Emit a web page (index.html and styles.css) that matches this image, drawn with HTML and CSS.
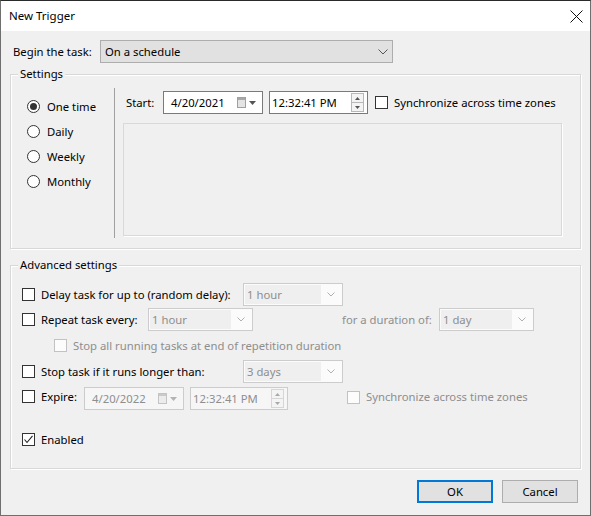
FILE: index.html
```html
<!DOCTYPE html>
<html>
<head>
<meta charset="utf-8">
<link rel="stylesheet" href="styles.css">
</head>
<body>
<div class="window">
  <div class="titlebar">
    <span class="title">New Trigger</span>
    <svg class="close" width="13" height="13" viewBox="0 0 13 13"><path d="M0.5 0.5 L12.5 12.5 M12.5 0.5 L0.5 12.5" stroke="#111" stroke-width="1" fill="none"/></svg>
  </div>
  <div class="content">
    <div class="begin-row">
      <span class="begin-label">Begin the task:</span>
      <div class="combo">
        <span class="combo-text">On a schedule</span>
        <svg class="chev" width="10" height="6" viewBox="0 0 10 6"><path d="M0.5 0.5 L5 5 L9.5 0.5" stroke="#555" stroke-width="1" fill="none"/></svg>
      </div>
    </div>

    <div class="group settings">
      <span class="legend">Settings</span>
      <div class="settings-body">
        <div class="radios">
          <div class="radio-row"><span class="radio checked"></span><span>One time</span></div>
          <div class="radio-row"><span class="radio"></span><span>Daily</span></div>
          <div class="radio-row"><span class="radio"></span><span>Weekly</span></div>
          <div class="radio-row"><span class="radio"></span><span>Monthly</span></div>
        </div>
        <div class="sched">
          <div class="start-row">
            <span class="start-label">Start:</span>
            <div class="field date">
              <span class="field-text">4/20/2021</span>
              <svg class="cal" width="9" height="11" viewBox="0 0 9 11"><rect x="0.5" y="0.5" width="8" height="10" fill="#e4e4e4" stroke="#a0a0a0"/><rect x="1" y="1" width="7" height="2" fill="#a8a8a8"/></svg>
              <svg class="tri" width="7" height="4" viewBox="0 0 7 4"><path d="M0 0 L7 0 L3.5 4 Z" fill="#555"/></svg>
            </div>
            <div class="field time">
              <span class="field-text">12:32:41 PM</span>
              <div class="spin">
                <span class="spin-btn"><svg width="5" height="3" viewBox="0 0 5 3"><path d="M0 3 L5 3 L2.5 0 Z" fill="#555"/></svg></span>
                <span class="spin-btn"><svg width="5" height="3" viewBox="0 0 5 3"><path d="M0 0 L5 0 L2.5 3 Z" fill="#555"/></svg></span>
              </div>
            </div>
            <span class="check sync-check"></span>
            <span class="label-after">Synchronize across time zones</span>
          </div>
          <div class="panel"></div>
        </div>
      </div>
    </div>

    <div class="group advanced">
      <span class="legend">Advanced settings</span>
      <div class="adv-body">
        <div class="row r1">
          <span class="check"></span>
          <span class="lbl w-delay">Delay task for up to (random delay):</span>
          <div class="dd w100"><span class="dd-text">1 hour</span><svg class="dchev" width="8" height="5" viewBox="0 0 8 5"><path d="M0.5 0.5 L4 4 L7.5 0.5" stroke="#b0b0b0" fill="none"/></svg></div>
        </div>
        <div class="row r2">
          <span class="check"></span>
          <span class="lbl w-repeat">Repeat task every:</span>
          <div class="dd w105"><span class="dd-text">1 hour</span><svg class="dchev" width="8" height="5" viewBox="0 0 8 5"><path d="M0.5 0.5 L4 4 L7.5 0.5" stroke="#b0b0b0" fill="none"/></svg></div>
          <span class="lbl dis w-dur">for a duration of:</span>
          <div class="dd w95"><span class="dd-text">1 day</span><svg class="dchev" width="8" height="5" viewBox="0 0 8 5"><path d="M0.5 0.5 L4 4 L7.5 0.5" stroke="#b0b0b0" fill="none"/></svg></div>
        </div>
        <div class="row r3">
          <span class="check disabled"></span>
          <span class="lbl dis">Stop all running tasks at end of repetition duration</span>
        </div>
        <div class="row r4">
          <span class="check"></span>
          <span class="lbl w-delay">Stop task if it runs longer than:</span>
          <div class="dd w100"><span class="dd-text">3 days</span><svg class="dchev" width="8" height="5" viewBox="0 0 8 5"><path d="M0.5 0.5 L4 4 L7.5 0.5" stroke="#b0b0b0" fill="none"/></svg></div>
        </div>
        <div class="row r5">
          <span class="check"></span>
          <span class="lbl w-expire">Expire:</span>
          <div class="field date dfield">
            <span class="field-text">4/20/2022</span>
            <svg class="cal" width="9" height="11" viewBox="0 0 9 11"><rect x="0.5" y="0.5" width="8" height="10" fill="#ececec" stroke="#c4c4c4"/><rect x="1" y="1" width="7" height="2" fill="#cacaca"/></svg>
            <svg class="tri" width="7" height="4" viewBox="0 0 7 4"><path d="M0 0 L7 0 L3.5 4 Z" fill="#b4b4b4"/></svg>
          </div>
          <div class="field time dfield t98">
            <span class="field-text">12:32:41 PM</span>
            <div class="spin dspin">
              <span class="spin-btn"><svg width="5" height="3" viewBox="0 0 5 3"><path d="M0 3 L5 3 L2.5 0 Z" fill="#a8a8a8"/></svg></span>
              <span class="spin-btn"><svg width="5" height="3" viewBox="0 0 5 3"><path d="M0 0 L5 0 L2.5 3 Z" fill="#a8a8a8"/></svg></span>
            </div>
          </div>
          <span class="check disabled exp-sync"></span>
          <span class="lbl dis">Synchronize across time zones</span>
        </div>
        <div class="row r6">
          <span class="check checked"><svg width="11" height="11" viewBox="0 0 11 11"><path d="M1.5 5.5 L4 8.5 L9.5 1.8" stroke="#222" stroke-width="1.1" fill="none"/></svg></span>
          <span class="lbl">Enabled</span>
        </div>
      </div>
    </div>

    <div class="buttons">
      <div class="btn ok">OK</div>
      <div class="btn">Cancel</div>
    </div>
  </div>
</div>
</body>
</html>
```

FILE: styles.css
```css
* { box-sizing: border-box; }
html, body { margin: 0; padding: 0; }
body {
  width: 591px;
  height: 516px;
  overflow: hidden;
  background: #f0f0f0;
  font-family: "Noto Sans", "Open Sans", sans-serif;
  font-size: 11.3px;
  color: #000;
}
.window {
  width: 591px;
  height: 516px;
  border: 1px solid #6f6f6f;
  border-top-color: #2a2a2a;
  background: #f0f0f0;
  display: flex;
  flex-direction: column;
}
.titlebar {
  height: 30px;
  background: #fff;
  display: flex;
  align-items: center;
  justify-content: space-between;
  padding: 0 7px 0 8px;
  flex: none;
}
.title { font-size: 11.5px; margin-top: -1px; }
.close { display: block; margin-top: 1px; }

.content {
  padding: 0 0 0 9px;
  display: flex;
  flex-direction: column;
}
.begin-row {
  margin-top: 9px;
  height: 23px;
  display: flex;
  align-items: center;
}
.begin-label { width: 90px; padding-left: 3px; }
.combo {
  width: 293px;
  height: 23px;
  background: #e1e1e1;
  border: 1px solid #adadad;
  display: flex;
  align-items: center;
  justify-content: space-between;
  padding: 0 4px 0 4px;
}
.chev { display: block; }

.group {
  position: relative;
  width: 571px;
  border: 1px solid #d8d8d8;
  box-shadow: inset 1px 1px 0 #fff, 1px 1px 0 #fff;
}
.legend {
  position: absolute;
  left: 7px;
  top: -9px;
  line-height: 16px;
  padding: 0 2px;
  background: #f0f0f0;
}
.settings {
  margin-top: 11px;
  height: 175px;
}
.settings-body { display: flex; }
.radios {
  width: 104px;
  height: 150px;
  margin-top: 13px;
  border-right: 1px solid #a0a0a0;
  padding: 6px 0 0 16px;
}
.radio-row {
  height: 25px;
  display: flex;
  align-items: center;
}
.radio {
  width: 13px;
  height: 13px;
  border: 1px solid #333;
  border-radius: 50%;
  background: #fff;
  margin-right: 7px;
  display: flex;
  align-items: center;
  justify-content: center;
  flex: none;
}
.radio.checked::after {
  content: "";
  width: 7px;
  height: 7px;
  border-radius: 50%;
  background: #333;
}
.sched {
  padding: 16px 0 0 8px;
}
.start-row {
  height: 23px;
  display: flex;
  align-items: center;
}
.start-label { width: 40px; padding-left: 3px; }
.field {
  height: 23px;
  background: #fff;
  border: 1px solid #7a7a7a;
  display: flex;
  align-items: center;
}
.field.date { width: 100px; padding: 0 6px 0 7px; }
.field.time { width: 99px; padding: 0 3px 0 2px; margin-left: 6px; }
.field.t98 { width: 98px; }
.field-text { flex: 1; }
.cal { display: block; margin-right: 3px; }
.tri { display: block; }
.spin {
  width: 13px;
  height: 19px;
  display: flex;
  flex-direction: column;
  border: 1px solid #b8b8b8;
}
.spin-btn {
  flex: 1;
  display: flex;
  align-items: center;
  justify-content: center;
  background: #f4f4f4;
}
.spin-btn + .spin-btn { border-top: 1px solid #b8b8b8; }
.spin-btn svg { display: block; }
.dspin { border-color: #d6d6d6; }
.dspin .spin-btn + .spin-btn { border-top-color: #d6d6d6; }

.check {
  width: 13px;
  height: 13px;
  border: 1px solid #333;
  background: #fff;
  flex: none;
  margin-right: 6px;
  display: flex;
  align-items: center;
  justify-content: center;
}
.check svg { display: block; }
.check.disabled { border-color: #c2c2c2; background: #fcfcfc; }
.sync-check { margin-left: 7px; }
.panel {
  margin-top: 9px;
  width: 439px;
  height: 113px;
  border: 1px solid #d9d9d9;
  box-shadow: 1px 1px 0 #fff;
}

.advanced {
  margin-top: 16px;
  height: 204px;
}
.adv-body { padding: 17px 0 0 11px; }
.row {
  display: flex;
  align-items: center;
  height: 23px;
}
.r2 { margin-top: 2px; }
.r3 { margin-top: 4px; height: 21px; padding-left: 32px; }
.r4 { margin-top: 4px; }
.r5 { margin-top: 4px; align-items: flex-start; }
.r5 .check { margin-top: 3px; }
.r5 .lbl { line-height: 19px; }
.r6 { margin-top: 18px; height: 22px; }
.lbl { white-space: nowrap; }
.dis { color: #8e8e8e; }
.w-delay { width: 202px; }
.w-repeat { width: 107px; }
.w-dur { width: 97px; margin-left: 89px; }
.w-expire { width: 43px; }
.dd {
  height: 23px;
  border: 1px solid #cccccc;
  background: #fbfbfb;
  display: flex;
  align-items: stretch;
  padding: 1px;
}
.w100 { width: 100px; }
.w105 { width: 105px; }
.w95 { width: 95px; }
.dd-text {
  flex: 1;
  background: #efefef;
  color: #8e8e8e;
  padding-left: 2px;
  display: flex;
  align-items: center;
}
.dchev { display: block; align-self: center; margin: 0 6px 0 6px; }
.dfield {
  border-color: #cccccc;
  background: #f6f6f6;
  color: #8e8e8e;
}
.exp-sync { margin-left: 59px; margin-top: 4px !important; }

.buttons {
  margin-top: 11px;
  width: 568px;
  display: flex;
  justify-content: flex-end;
  gap: 9px;
}
.btn {
  width: 76px;
  height: 23px;
  background: #e1e1e1;
  border: 1px solid #adadad;
  display: flex;
  align-items: center;
  justify-content: center;
}
.btn.ok { border: 2px solid #0078d7; }
```
